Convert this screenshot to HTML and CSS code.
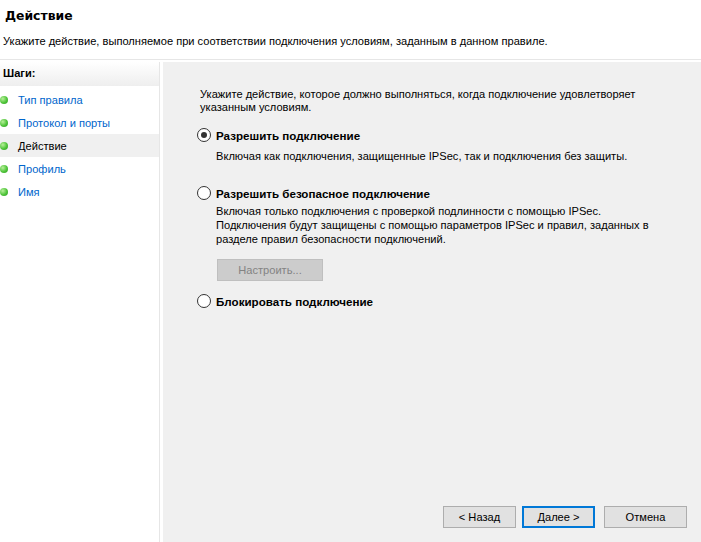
FILE: index.html
```html
<!DOCTYPE html>
<html lang="ru">
<head>
    <meta charset="UTF-8">
    <title>Действие</title>
    <link rel="stylesheet" href="styles.css">
</head>
<body>

    <div class="header">
        <div class="title">Действие</div>
        <div class="subtitle">Укажите действие, выполняемое при соответствии подключения условиям, заданным в данном правиле.</div>
    </div>

    <div class="main">
        <div class="steps">
            <div class="steps-head">Шаги:</div>
            <div class="step"><span class="dot"></span><span class="step-link">Тип правила</span></div>
            <div class="step"><span class="dot"></span><span class="step-link">Протокол и порты</span></div>
            <div class="step current"><span class="dot"></span><span class="step-link">Действие</span></div>
            <div class="step"><span class="dot"></span><span class="step-link">Профиль</span></div>
            <div class="step"><span class="dot"></span><span class="step-link">Имя</span></div>
        </div>

        <div class="content">
            <p class="intro">Укажите действие, которое должно выполняться, когда подключение удовлетворяет указанным условиям.</p>

            <div class="option allow">
                <div class="radio-row"><span class="radio checked"></span><span class="label">Разрешить подключение</span></div>
                <p class="desc">Включая как подключения, защищенные IPSec, так и подключения без защиты.</p>
            </div>

            <div class="option secure">
                <div class="radio-row"><span class="radio"></span><span class="label">Разрешить безопасное подключение</span></div>
                <p class="desc">Включая только подключения с проверкой подлинности с помощью IPSec.<br>Подключения будут защищены с помощью параметров IPSec и правил, заданных в разделе правил безопасности подключений.</p>
                <button class="btn disabled" disabled>Настроить...</button>
            </div>

            <div class="option">
                <div class="radio-row"><span class="radio"></span><span class="label">Блокировать подключение</span></div>
            </div>

            <div class="buttons">
                <button class="btn">&lt; Назад</button>
                <button class="btn default">Далее &gt;</button>
                <button class="btn cancel">Отмена</button>
            </div>
        </div>
    </div>

</body>
</html>
```

FILE: styles.css
```css
body {
    margin: 0;
    font-family: "Liberation Sans", Arial, sans-serif;
    font-size: 11.1px;
    color: #000;
    background-color: white;
    height: 542px;
    overflow: hidden;
}
.header {
    height: 59px;
    border-bottom: 1px solid #e6e6e6;
}
.title {
    font-family: "DejaVu Sans", sans-serif;
    font-weight: bold;
    font-size: 12.4px;
    padding: 8px 0 0 5px;
}
.subtitle {
    padding: 12px 0 0 3px;
}
.main {
    display: flex;
    height: 480px;
    padding-top: 2px;
}
.steps {
    width: 159px;
    border-right: 1px solid #e6e6e6;
    margin-right: 3px;
}
.steps-head {
    height: 24px;
    line-height: 23px;
    padding-left: 3px;
    font-weight: bold;
    background: linear-gradient(#ffffff, #eeeeee);
    margin-bottom: 2px;
}
.step {
    display: flex;
    align-items: center;
    height: 23px;
}
.step.current {
    background-color: #f0f0f0;
}
.step-link {
    color: #0066cc;
}
.step.current .step-link {
    color: #000;
}
.dot {
    width: 8px;
    height: 8px;
    border-radius: 50%;
    background: radial-gradient(circle at 35% 35%, #b8f09a, #4fc43a 55%, #2e9a22);
    margin: 0 10px 0 0;
}
.content {
    flex: 1;
    background-color: #f0f0f0;
    position: relative;
    padding: 26px 50px 0 37px;
}
.intro {
    margin: 0 0 13px 0;
    line-height: 13px;
}
.option {
    margin-bottom: 12px;
}
.option.allow {
    margin-bottom: 22px;
}
.radio-row {
    display: flex;
    align-items: center;
    height: 16px;
}
.radio {
    width: 12px;
    height: 12px;
    border: 1px solid #333;
    border-radius: 50%;
    background-color: white;
    margin: 0 5px 0 -3px;
    position: relative;
}
.radio.checked::after {
    content: "";
    position: absolute;
    left: 3px;
    top: 3px;
    width: 6px;
    height: 6px;
    border-radius: 50%;
    background-color: #333;
}
.label {
    font-weight: bold;
    font-size: 11.6px;
}
.desc {
    margin: 6px 0 0 16px;
    line-height: 14px;
}
.secure .desc {
    margin-top: 3px;
}
.btn {
    font-family: "Liberation Sans", Arial, sans-serif;
    font-size: 11.1px;
    height: 22px;
    background-color: #e1e1e1;
    border: 1px solid #adadad;
    padding: 0;
    color: #000;
}
.btn.disabled {
    margin: 13px 0 0 17px;
    width: 106px;
    background-color: #cccccc;
    border-color: #bfbfbf;
    color: #838383;
}
.buttons {
    position: absolute;
    right: 14px;
    bottom: 14px;
    display: flex;
    gap: 6px;
}
.buttons .btn {
    width: 73px;
}
.buttons .btn.default {
    border: 2px solid #0078d7;
}
.buttons .btn.cancel {
    width: 83px;
    margin-left: 3px;
}
```
